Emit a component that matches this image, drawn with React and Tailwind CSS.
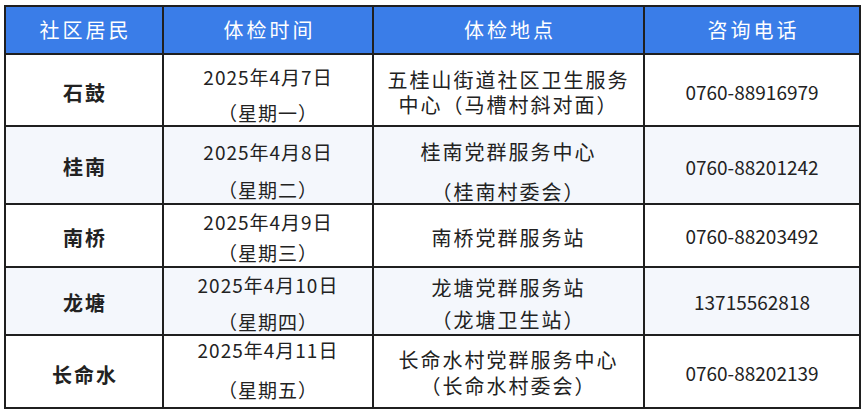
import React from "react";

// Column widths include the 2px left divider for columns 2-4
const COLS = "grid grid-cols-[156px_210px_271px_216px]";

const rows = [
  {
    name: "石鼓",
    date: ["2025年4月7日", "（星期一）"],
    place: ["五桂山街道社区卫生服务", "中心（马槽村斜对面）"],
    phone: "0760-88916979",
    h: "h-[72px]",
    bg: "bg-white",
    namePt: "pt-[26px]",
    datePt: "pt-[10px]",
    dateGap: "mt-[12px]",
    placePt: "pt-[12px]",
    placeLead: "leading-[25px]",
    phonePt: "pt-[25px]",
  },
  {
    name: "桂南",
    date: ["2025年4月8日", "（星期二）"],
    place: ["桂南党群服务中心", "（桂南村委会）"],
    phone: "0760-88201242",
    h: "h-[78px]",
    bg: "bg-[#f4f7fc]",
    namePt: "pt-[28px]",
    datePt: "pt-[13px]",
    dateGap: "mt-[14px]",
    placePt: "pt-[13px]",
    placeGap: "mt-[16px]",
    phonePt: "pt-[28px]",
  },
  {
    name: "南桥",
    date: ["2025年4月9日", "（星期三）"],
    place: ["南桥党群服务站"],
    phone: "0760-88203492",
    h: "h-[63px]",
    bg: "bg-white",
    namePt: "pt-[21px]",
    datePt: "pt-[5px]",
    dateGap: "mt-[7px]",
    placePt: "pt-[21px]",
    placeGap: "mt-0",
    phonePt: "pt-[19px]",
  },
  {
    name: "龙塘",
    date: ["2025年4月10日", "（星期四）"],
    place: ["龙塘党群服务站", "（龙塘卫生站）"],
    phone: "13715562818",
    h: "h-[68px]",
    bg: "bg-[#f4f7fc]",
    namePt: "pt-[23px]",
    datePt: "pt-[5px]",
    dateGap: "mt-[13px]",
    placePt: "pt-[8px]",
    placeGap: "mt-[8px]",
    phonePt: "pt-[22px]",
  },
  {
    name: "长命水",
    date: ["2025年4月11日", "（星期五）"],
    place: ["长命水村党群服务中心", "（长命水村委会）"],
    phone: "0760-88202139",
    h: "h-[73px]",
    bg: "bg-white",
    namePt: "pt-[27px]",
    datePt: "pt-[2px]",
    dateGap: "mt-[16px]",
    placePt: "pt-[11px]",
    placeLead: "leading-[26px]",
    phonePt: "pt-[25px]",
  },
];

// Cell with stacked lines; tightly spaced lines are kept in one text block
const Lines = ({ lines, pt, gap, lead, className }) => (
  <div className={`flex flex-col items-center border-l-2 border-[#1f1f1f] ${pt}`}>
    {lead ? (
      <div className={`text-center whitespace-nowrap ${lead} ${className}`}>
        {lines.map((l, i) => (
          <React.Fragment key={i}>
            {i > 0 && <br />}
            {l}
          </React.Fragment>
        ))}
      </div>
    ) : (
      lines.map((l, i) => (
        <div key={i} className={`leading-[24px] whitespace-nowrap ${className} ${i > 0 ? gap : ""}`}>
          {l}
        </div>
      ))
    )}
  </div>
);

export default function App() {
  return (
    <div className="w-[864px] h-[418px] bg-white pt-[5px] pl-[4px] font-['Noto_Sans_CJK_SC','Noto_Sans',sans-serif] text-[#222]">
      <div className="w-[857px] border-2 border-[#1f1f1f]">
        {/* Header */}
        <div className={`${COLS} h-[46px] bg-[#3a7de8] text-white text-[20px] tracking-[3px]`}>
          {["社区居民", "体检时间", "体检地点", "咨询电话"].map((t, i) => (
            <div
              key={t}
              className={`flex items-center justify-center pl-[3px] ${i > 0 ? "border-l-2 border-[#1f1f1f]" : ""}`}
            >
              {t}
            </div>
          ))}
        </div>

        {/* Body rows */}
        {rows.map((r) => (
          <div key={r.name} className={`${COLS} ${r.h} ${r.bg} border-t-2 border-[#1f1f1f]`}>
            <div className={`flex justify-center ${r.namePt}`}>
              <div className="leading-[24px] text-[20px] font-bold tracking-[2px] pl-[2px]">{r.name}</div>
            </div>
            <Lines lines={r.date} pt={r.datePt} gap={r.dateGap} className="text-[19px] tracking-[1px]" />
            <Lines
              lines={r.place}
              pt={r.placePt}
              gap={r.placeGap}
              lead={r.placeLead}
              className="text-[20px] tracking-[2px]"
            />
            <Lines lines={[r.phone]} pt={r.phonePt} gap="" className="text-[19px]" />
          </div>
        ))}
      </div>
    </div>
  );
}
